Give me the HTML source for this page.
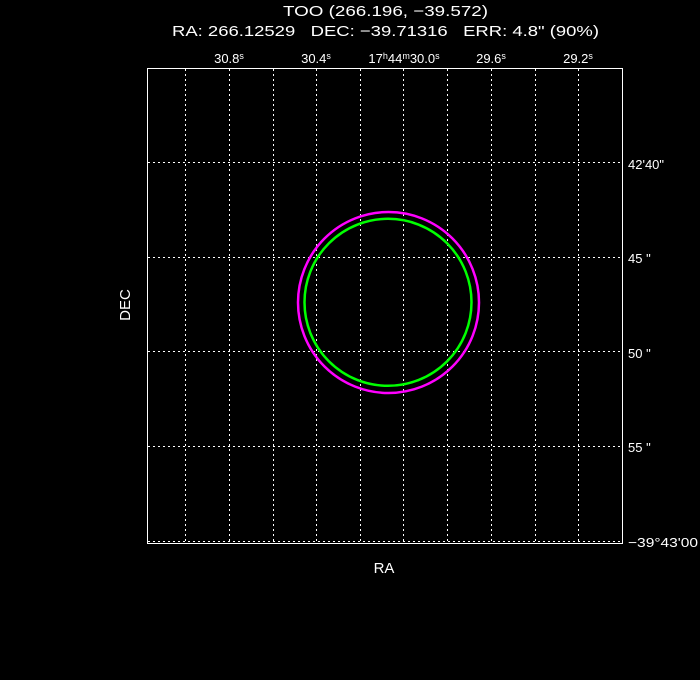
<!DOCTYPE html>
<html><head><style>html,body{margin:0;padding:0;background:#000;}svg{display:block}text{white-space:pre}</style></head>
<body>
<svg width="700" height="680" xmlns="http://www.w3.org/2000/svg" font-family="Liberation Sans, sans-serif" fill="#fff">
<rect width="700" height="680" fill="#000"/>
<text x="283" y="16" font-size="15" textLength="205" lengthAdjust="spacingAndGlyphs">TOO (266.196, −39.572)</text>
<text x="172" y="36" font-size="15" textLength="427" lengthAdjust="spacingAndGlyphs" xml:space="preserve">RA: 266.12529   DEC: −39.71316   ERR: 4.8" (90%)</text>
<g font-size="13" text-anchor="middle">
<text x="229" y="63">30.8<tspan font-size="9" dy="-4">s</tspan></text>
<text x="316" y="63">30.4<tspan font-size="9" dy="-4">s</tspan></text>
<text x="404" y="63">17<tspan font-size="9" dy="-4">h</tspan><tspan dy="4">44</tspan><tspan font-size="9" dy="-4">m</tspan><tspan dy="4">30.0</tspan><tspan font-size="9" dy="-4">s</tspan></text>
<text x="491" y="63">29.6<tspan font-size="9" dy="-4">s</tspan></text>
<text x="578" y="63">29.2<tspan font-size="9" dy="-4">s</tspan></text>
</g>
<g font-size="13">
<text x="628" y="169">42'40"</text>
<text x="628" y="263">45 "</text>
<text x="628" y="358">50 "</text>
<text x="628" y="452">55 "</text>
<text x="628" y="547" textLength="70" lengthAdjust="spacingAndGlyphs">−39°43'00</text>
</g>
<g stroke="#fff" stroke-width="1" stroke-dasharray="2,3" fill="none">
<path d="M185.5 69V543M229.5 69V543M273.5 69V543M316.5 69V543M360.5 69V543M403.5 69V543M447.5 69V543M491.5 69V543M535.5 69V543M578.5 69V543"/>
<path d="M148 162.5H622M148 257.5H622M148 351.5H622M148 446.5H622M148 541.5H622"/>
</g>
<rect x="147.5" y="68.5" width="475" height="475" fill="none" stroke="#fff" stroke-width="1"/>
<circle cx="388.5" cy="302.5" r="90.5" fill="none" stroke="#ff00ff" stroke-width="2.5"/>
<circle cx="388" cy="302.3" r="83.5" fill="none" stroke="#00ff00" stroke-width="2.5"/>
<text x="384" y="573" font-size="15" text-anchor="middle">RA</text>
<text transform="translate(130,305) rotate(-90)" font-size="15" text-anchor="middle">DEC</text>
</svg>
</body></html>
